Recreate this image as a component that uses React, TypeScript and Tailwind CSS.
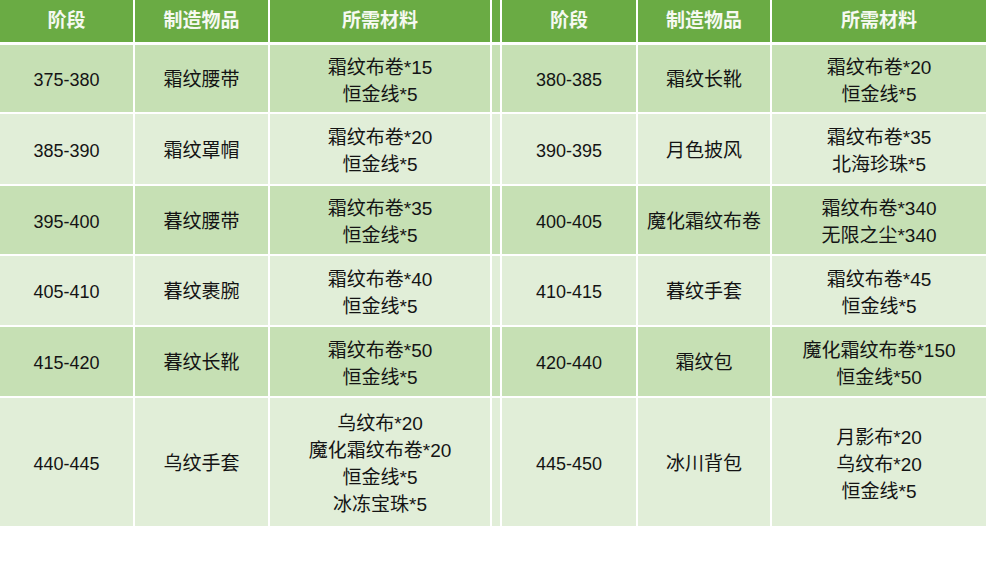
type Entry = {
	stage: string;
	item: string;
	mats: string[];
};

type Row = {
	h: string;
	left: Entry;
	right: Entry;
};

const rows: Row[] = [
	{
		h: "h-[67px]",
		left: { stage: "375-380", item: "霜纹腰带", mats: ["霜纹布卷*15", "恒金线*5"] },
		right: { stage: "380-385", item: "霜纹长靴", mats: ["霜纹布卷*20", "恒金线*5"] },
	},
	{
		h: "h-[70px]",
		left: { stage: "385-390", item: "霜纹罩帽", mats: ["霜纹布卷*20", "恒金线*5"] },
		right: { stage: "390-395", item: "月色披风", mats: ["霜纹布卷*35", "北海珍珠*5"] },
	},
	{
		h: "h-[68px]",
		left: { stage: "395-400", item: "暮纹腰带", mats: ["霜纹布卷*35", "恒金线*5"] },
		right: { stage: "400-405", item: "魔化霜纹布卷", mats: ["霜纹布卷*340", "无限之尘*340"] },
	},
	{
		h: "h-[69px]",
		left: { stage: "405-410", item: "暮纹裹腕", mats: ["霜纹布卷*40", "恒金线*5"] },
		right: { stage: "410-415", item: "暮纹手套", mats: ["霜纹布卷*45", "恒金线*5"] },
	},
	{
		h: "h-[69px]",
		left: { stage: "415-420", item: "暮纹长靴", mats: ["霜纹布卷*50", "恒金线*5"] },
		right: { stage: "420-440", item: "霜纹包", mats: ["魔化霜纹布卷*150", "恒金线*50"] },
	},
	{
		h: "h-[128px]",
		left: {
			stage: "440-445",
			item: "乌纹手套",
			mats: ["乌纹布*20", "魔化霜纹布卷*20", "恒金线*5", "冰冻宝珠*5"],
		},
		right: {
			stage: "445-450",
			item: "冰川背包",
			mats: ["月影布*20", "乌纹布*20", "恒金线*5"],
		},
	},
];

const cols = "grid grid-cols-[133px_133px_220px_8px_134px_132px_214px] gap-x-[2px]";
const font = "font-['Liberation_Sans','Noto_Sans_CJK_SC',sans-serif]";

function Cell({
	children,
	bg,
	className = "",
}: {
	children: React.ReactNode;
	bg: string;
	className?: string;
}) {
	return (
		<div className={`flex flex-col items-center justify-center ${bg} ${className}`}>
			{children}
		</div>
	);
}

function Mats({ lines }: { lines: string[] }) {
	return (
		<>
			{lines.map((m) => (
				<span key={m} className="leading-[27px]">
					{m}
				</span>
			))}
		</>
	);
}

export default function App() {
	return (
		<div className={`w-[986px] h-[564px] bg-white ${font}`}>
			<div className="flex flex-col gap-y-[2px]">
				{/* header */}
				<div className={`${cols} h-[42px] mb-[1px] text-[19px] font-bold text-[#f5f9f1]`}>
					<Cell bg="bg-[#6aab44]">阶段</Cell>
					<Cell bg="bg-[#6aab44]">制造物品</Cell>
					<Cell bg="bg-[#6aab44]">所需材料</Cell>
					<div className="bg-[#6aab44]" />
					<Cell bg="bg-[#6aab44]">阶段</Cell>
					<Cell bg="bg-[#6aab44]">制造物品</Cell>
					<Cell bg="bg-[#6aab44]">所需材料</Cell>
				</div>

				{rows.map((r, i) => {
					const bg = i % 2 === 0 ? "bg-[#c6e0b4]" : "bg-[#e1eed8]";
					return (
						<div
							key={r.left.stage}
							className={`${cols} ${r.h} text-[19px] text-[#141414]`}
						>
							<Cell bg={bg} className="pt-[4px] text-[18px]">
								{r.left.stage}
							</Cell>
							<Cell bg={bg} className="pt-[4px]">
								{r.left.item}
							</Cell>
							<Cell bg={bg} className="pt-[4px]">
								<Mats lines={r.left.mats} />
							</Cell>
							<div className={bg} />
							<Cell bg={bg} className="pt-[4px] text-[18px]">
								{r.right.stage}
							</Cell>
							<Cell bg={bg} className="pt-[4px]">
								{r.right.item}
							</Cell>
							<Cell bg={bg} className="pt-[4px]">
								<Mats lines={r.right.mats} />
							</Cell>
						</div>
					);
				})}
			</div>
		</div>
	);
}
